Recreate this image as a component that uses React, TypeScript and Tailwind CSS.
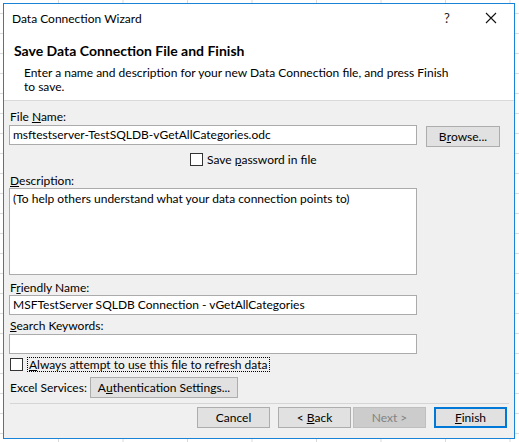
import React from "react";

const F = "[font-family:'Lato',Arial,sans-serif]";

function Btn({ children, w = "w-[73px]", extra = "" }: { children: React.ReactNode; w?: string; extra?: string }) {
  return (
    <div
      className={`${w} h-[21px] flex items-center justify-center bg-[#e1e1e1] border border-[#adadad] text-[12px] text-black whitespace-pre ${extra}`}
    >
      {children}
    </div>
  );
}

function Input({ value, h = "h-[20px]", w = "w-[408px]" }: { value?: string; h?: string; w?: string }) {
  return (
    <div className={`${w} ${h} bg-white border border-[#ababab] px-[3px] text-[12px] leading-[18px] text-black whitespace-nowrap overflow-hidden`}>
      {value}
    </div>
  );
}

function Check() {
  return <div className="w-[13px] h-[13px] bg-white border border-[#333333] shrink-0" />;
}

export default function App() {
  return (
    <div
      className={`${F} w-[519px] h-[442px] overflow-hidden bg-white bg-[linear-gradient(#dadada_1px,transparent_1px),linear-gradient(90deg,#dadada_1px,transparent_1px)] bg-[size:64.5px_20px] bg-[position:58px_13px] pt-[3px] pl-[3px]`}
    >
      <div className="w-[512px] h-[436px] border border-[#1883d7] bg-[#f0f0f0] flex flex-col">
        {/* Title bar */}
        <div className="h-[29px] bg-white flex items-center relative shrink-0">
          <span className="ml-[8px] text-[12px] text-black">Data Connection Wizard</span>
          <span className="absolute left-[440px] top-[5px] text-[13px] text-[#222]">?</span>
          <svg className="absolute left-[481px] top-[8px]" width="12" height="12" viewBox="0 0 12 12">
            <path d="M1 1 L11 11 M11 1 L1 11" stroke="#111" strokeWidth="1.1" fill="none" />
          </svg>
        </div>
        {/* Header */}
        <div className="bg-white shrink-0 h-[68px] border-b border-[#d9d9d9]">
          <div className="ml-[10px] mt-[8px] h-[20px] leading-[20px] text-[14px] font-bold text-black whitespace-nowrap">
            Save Data Connection File and Finish
          </div>
          <div className="ml-[20px] mt-[5px] text-[12px] leading-[14px] text-black whitespace-nowrap">
            Enter a name and description for your new Data Connection file, and press Finish
            <br />
            to save.
          </div>
        </div>
        {/* Body */}
        <div className="pl-[5px] text-[12px] text-black flex flex-col">
          <div className="mt-[8px] ml-[1px] h-[15px] leading-[15px]">
            File <u>N</u>ame:
          </div>
          <div className="mt-[1px] flex items-start">
            <Input value="msftestserver-TestSQLDB-vGetAllCategories.odc" />
            <div className="ml-[9px] mt-[1px]">
              <Btn w="w-[74px]">
                B<u>r</u>owse...
              </Btn>
            </div>
          </div>
          <div className="mt-[6px] ml-[181px] flex items-center h-[13px]">
            <Check />
            <span className="ml-[4px] leading-[15px] whitespace-nowrap">
              Save <u>p</u>assword in file
            </span>
          </div>
          <div className="mt-[7px] ml-[1px] h-[15px] leading-[15px]">
            <u>D</u>escription:
          </div>
          <div className="w-[408px] h-[87px] bg-white border border-[#ababab] px-[3px] pt-[2px] leading-[15px]">
            (To help others understand what your data connection points to)
          </div>
          <div className="mt-[5px] ml-[1px] h-[15px] leading-[15px]">
            F<u>r</u>iendly Name:
          </div>
          <Input value="MSFTestServer SQLDB Connection - vGetAllCategories" />
          <div className="mt-[3px] ml-[1px] h-[15px] leading-[15px]">
            <u>S</u>earch Keywords:
          </div>
          <div className="mt-[1px]">
            <Input />
          </div>
          <div className="mt-[3px] ml-[1px] flex items-center h-[15px]">
            <Check />
            <span className="ml-[4px] border border-dotted border-black h-[15px] leading-[13px] px-[1px] whitespace-nowrap">
              <u>A</u>lways attempt to use this file to refresh data
            </span>
          </div>
          <div className="mt-[5px] ml-[1px] flex items-center h-[21px]">
            <span className="w-[80px] whitespace-nowrap">Excel Services:</span>
            <Btn w="w-[148px]">
              A<u>u</u>thentication Settings...
            </Btn>
          </div>
          <div className="mt-[5px] ml-[1px] mr-[5px] h-[1px] bg-[#d5d5d5]" />
          <div className="mt-[3px] flex justify-end pr-[7px]">
            <Btn>Cancel</Btn>
            <div className="ml-[8px]">
              <Btn>
                {"< "}
                <u>B</u>ack
              </Btn>
            </div>
            <div className="ml-[2px]">
              <Btn extra="!bg-[#cccccc] !border-[#bfbfbf] !text-[#838383]">{"Next >"}</Btn>
            </div>
            <div className="ml-[8px]">
              <Btn extra="!border-2 !border-[#0078d7]">
                <u>F</u>inish
              </Btn>
            </div>
          </div>
        </div>
      </div>
    </div>
  );
}
